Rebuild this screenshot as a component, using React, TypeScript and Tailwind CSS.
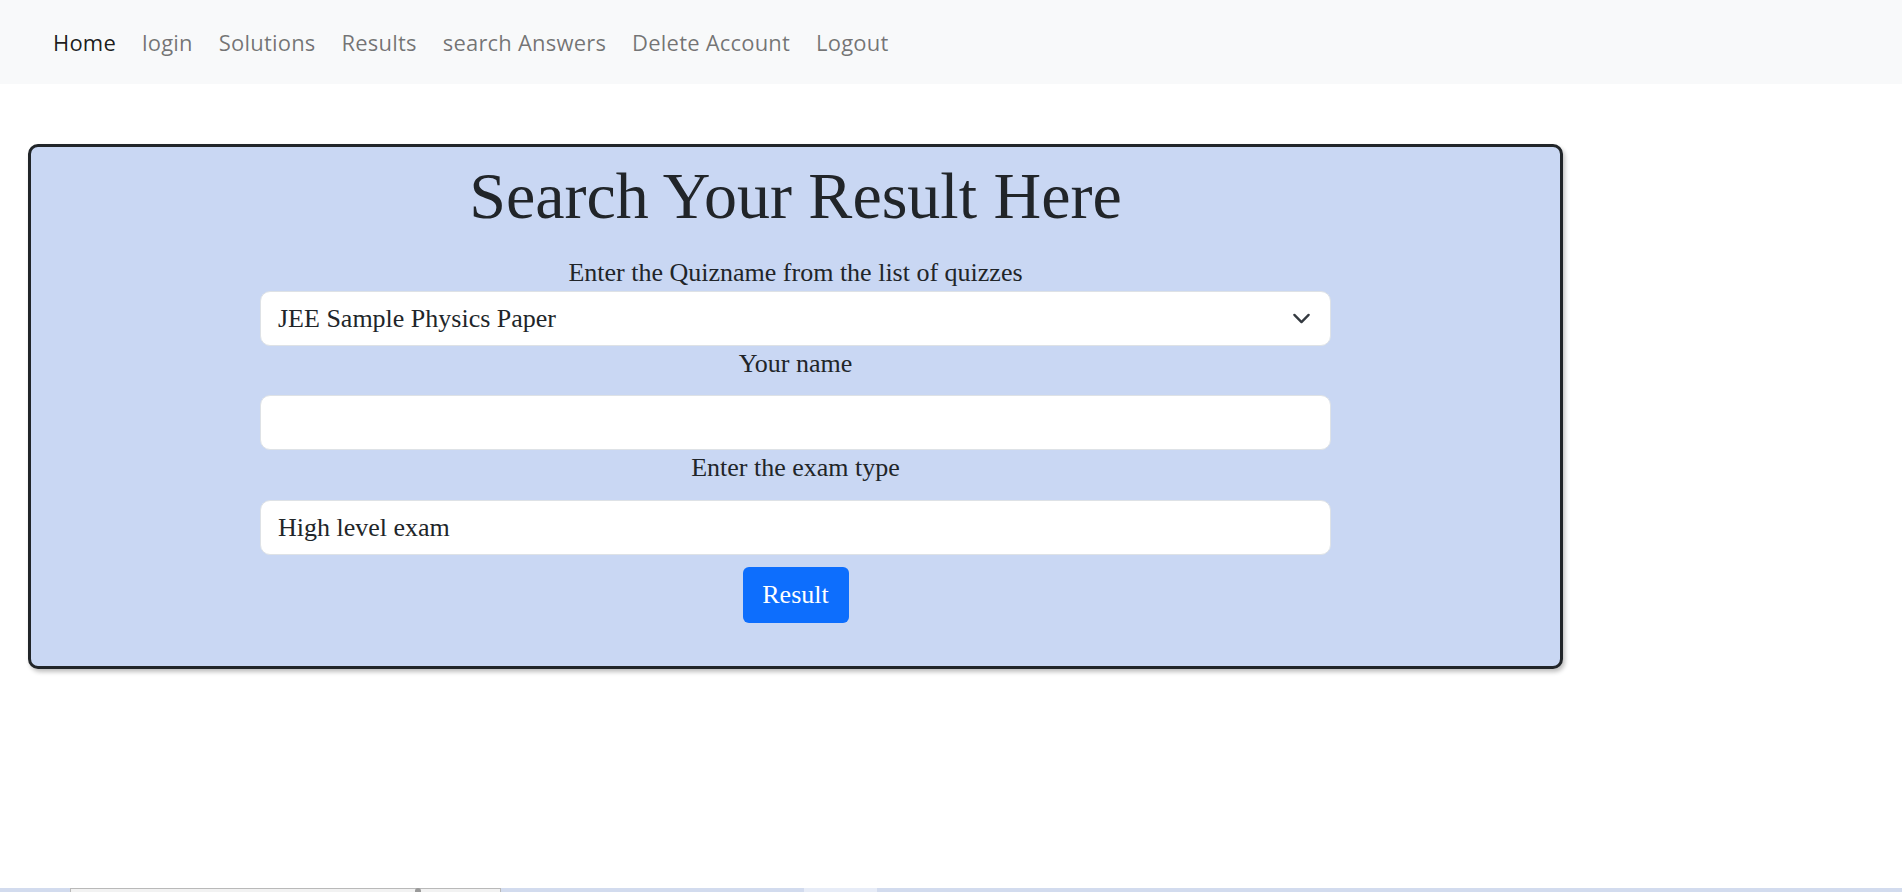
import React from "react";

const serif = { fontFamily: '"Liberation Serif", "Times New Roman", serif' };

export default function App() {
  const links = ["login", "Solutions", "Results", "search Answers", "Delete Account", "Logout"];
  return (
    <div className="h-[892px] flex flex-col bg-white overflow-hidden">
      <nav
        className="h-[84px] shrink-0 bg-[#f8f9fa] flex items-center pl-[40px] pt-[1px]"
        style={{ fontFamily: '"Open Sans", "Noto Sans", sans-serif' }}
      >
        <a className="px-[13px] text-[22px] leading-[33px] tracking-[0.2px] text-[rgba(0,0,0,0.9)]">Home</a>
        {links.map((l) => (
          <a key={l} className="px-[13px] text-[22px] leading-[33px] tracking-[0.2px] text-[rgba(0,0,0,0.55)]">
            {l}
          </a>
        ))}
      </nav>

      <main className="pt-[60px] pl-[28px]">
        <div
          className="w-[1535px] h-[525px] border-[3px] border-[#212529] rounded-[10px] bg-[#c9d7f3] shadow-[2px_3px_4px_rgba(0,0,0,0.25)] flex flex-col items-center pt-[10px] text-[#212529]"
          style={serif}
        >
          <h1 className="text-[66px] leading-[78px] font-normal">Search Your Result Here</h1>
          <div className="w-[1071px] flex flex-col items-center mt-[23px]">
            <label className="text-[26px] leading-[30px]">Enter the Quizname from the list of quizzes</label>
            <div className="mt-[3px] w-full h-[55px] bg-white border border-[#dee2e6] rounded-[10px] flex items-center justify-between pl-[17px] pr-[19px]">
              <span className="text-[26px] leading-[30px]">JEE Sample Physics Paper</span>
              <svg width="19" height="19" viewBox="0 0 16 16" fill="none">
                <path d="m2 5 6 6 6-6" stroke="#343a40" strokeWidth="2" strokeLinecap="round" strokeLinejoin="round" />
              </svg>
            </div>
            <label className="mt-[3px] text-[26px] leading-[30px]">Your name</label>
            <div className="mt-[16px] w-full h-[55px] bg-white border border-[#dee2e6] rounded-[10px]" />
            <label className="mt-[3px] text-[26px] leading-[30px]">Enter the exam type</label>
            <div className="mt-[17px] w-full h-[55px] bg-white border border-[#dee2e6] rounded-[10px] flex items-center pl-[17px]">
              <span className="text-[26px] leading-[30px]">High level exam</span>
            </div>
            <button className="mt-[12px] w-[106px] h-[56px] bg-[#0d6efd] rounded-[6px] text-white text-[26px] leading-[30px]">
              Result
            </button>
          </div>
        </div>
      </main>

      <div className="mt-auto h-[4px] bg-[#d2dbee] relative shrink-0">
        <div className="absolute left-[70px] top-0 w-[431px] h-[4px] bg-[#f2f2f2] border-t border-x border-[#b9b9b9]" />
        <div className="absolute left-[415px] top-0 w-[6px] h-[4px] bg-[#9a9a9a] rounded-t-full" />
        <div className="absolute left-[804px] top-0 w-[73px] h-[4px] bg-[#e7ecf7]" />
      </div>
    </div>
  );
}
